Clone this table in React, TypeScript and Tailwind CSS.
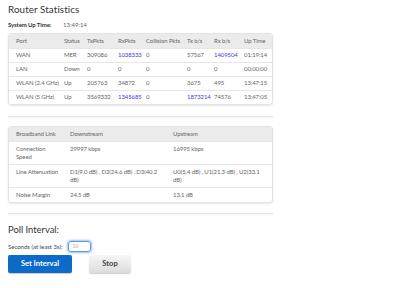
const PORTS = [
  { port: 'WAN', status: 'MER', tx: '309086', rx: '1038333', rxLink: true, col: '0', txbs: '57567', txbsLink: false, rxbs: '1409504', rxbsLink: true, up: '01:19:14' },
  { port: 'LAN', status: 'Down', tx: '0', rx: '0', rxLink: false, col: '0', txbs: '0', txbsLink: false, rxbs: '0', rxbsLink: false, up: '00:00:00' },
  { port: 'WLAN (2.4 GHz)', status: 'Up', tx: '205763', rx: '34872', rxLink: false, col: '0', txbs: '3675', txbsLink: false, rxbs: '495', rxbsLink: false, up: '13:47:15' },
  { port: 'WLAN (5 GHz)', status: 'Up', tx: '3569332', rx: '1345685', rxLink: true, col: '0', txbs: '1873214', txbsLink: true, rxbs: '74576', rxbsLink: false, up: '13:47:05' },
]

const LINK = [
  { name: 'Connection Speed', down: '29997 kbps', up: '16995 kbps' },
  { name: 'Line Attenuation', down: 'D1(9.0 dB) , D2(24.6 dB) , D3(40.2 dB)', up: 'U0(5.4 dB) , U1(21.3 dB) , U2(33.1 dB)' },
  { name: 'Noise Margin', down: '24.5 dB', up: '13.1 dB' },
]

const v = (s: string, link: boolean) => (link ? <span className="text-[#3d3dd6]">{s}</span> : s)

function Rule() {
  return <div className="h-px w-[265px] bg-[#e6e6e6] shadow-[0_1px_2px_rgba(0,0,0,0.08)]" />
}

export default function App() {
  return (
    <div className="h-[288px] w-[400px] overflow-hidden bg-white px-2 pt-[2px] text-[#666] [font-family:Lato,sans-serif]">
      <h1 className="text-[9.8px] leading-[14px] tracking-[0.1px] text-[#333]">Router Statistics</h1>
      <div className="mt-[5px] flex text-[6px] leading-[8px]">
        <span className="w-[55px] font-bold tracking-[-0.1px] text-[#333]">System Up Time:</span>
        <span>13:49:14</span>
      </div>

      <div className="mt-[4px] w-[265px] overflow-hidden rounded-[3px] border border-[#e3e3e3] shadow-[0_1px_2px_rgba(0,0,0,0.1)]">
        <table className="w-full table-fixed border-collapse text-[6px] leading-[8px] tracking-[-0.1px]">
          <colgroup>
            <col className="w-[53px]" />
            <col className="w-[23px]" />
            <col className="w-[31px]" />
            <col className="w-[28px]" />
            <col className="w-[41px]" />
            <col className="w-[27px]" />
            <col className="w-[30px]" />
            <col className="w-[32px]" />
          </colgroup>
          <thead>
            <tr className="h-[14px] bg-[#ebebeb] text-left">
              <th className="whitespace-nowrap pl-[7px] font-normal">Port</th>
              <th className="whitespace-nowrap pl-[2px] font-normal">Status</th>
              <th className="whitespace-nowrap pl-[2px] font-normal">TxPkts</th>
              <th className="whitespace-nowrap pl-[2px] font-normal">RxPkts</th>
              <th className="whitespace-nowrap pl-[2px] font-normal">Collision Pkts</th>
              <th className="whitespace-nowrap pl-[2px] font-normal">Tx b/s</th>
              <th className="whitespace-nowrap pl-[2px] font-normal">Rx b/s</th>
              <th className="whitespace-nowrap pl-[2px] font-normal">Up Time</th>
            </tr>
          </thead>
          <tbody>
            {PORTS.map((r) => (
              <tr key={r.port} className="h-[14px] whitespace-nowrap border-t border-[#e6e6e6]">
                <td className="pl-[7px]">{r.port}</td>
                <td className="pl-[2px]">{r.status}</td>
                <td className="pl-[2px]">{r.tx}</td>
                <td className="pl-[2px]">{v(r.rx, r.rxLink)}</td>
                <td className="pl-[2px]">{r.col}</td>
                <td className="pl-[2px]">{v(r.txbs, r.txbsLink)}</td>
                <td className="pl-[2px]">{v(r.rxbs, r.rxbsLink)}</td>
                <td className="pl-[2px]">{r.up}</td>
              </tr>
            ))}
          </tbody>
        </table>
      </div>

      <div className="mt-[11px]">
        <Rule />
      </div>

      <div className="mt-[9px] w-[265px] overflow-hidden rounded-[3px] border border-[#e3e3e3] shadow-[0_1px_2px_rgba(0,0,0,0.1)]">
        <table className="w-full table-fixed border-collapse text-[6px] leading-[8px] tracking-[-0.1px]">
          <colgroup>
            <col className="w-[59px]" />
            <col className="w-[103px]" />
            <col className="w-[103px]" />
          </colgroup>
          <thead>
            <tr className="h-[14px] bg-[#ebebeb] text-left">
              <th className="whitespace-nowrap pl-[7px] font-normal">Broadband Link</th>
              <th className="pl-[2px] font-normal">Downstream</th>
              <th className="pl-[2px] font-normal">Upstream</th>
            </tr>
          </thead>
          <tbody>
            {LINK.map((r) => (
              <tr key={r.name} className="border-t border-[#e6e6e6] align-top">
                <td className="py-[3px] pl-[7px] pr-[8px]">{r.name}</td>
                <td className="py-[3px] pl-[2px] pr-[8px]">{r.down}</td>
                <td className="py-[3px] pl-[2px] pr-[8px]">{r.up}</td>
              </tr>
            ))}
          </tbody>
        </table>
      </div>

      <div className="mt-[10px]">
        <Rule />
      </div>

      <h2 className="mt-[10px] text-[9.4px] leading-[12px] text-[#333]">Poll Interval:</h2>
      <div className="mt-[5px] flex items-center gap-[6px] text-[6px] text-[#444]">
        <span>Seconds (at least 3s):</span>
        <input
          defaultValue="10"
          className="h-[11px] w-[23px] rounded-[3px] border border-[#5b9be6] px-[3px] text-[5px] text-[#aaa] shadow-[0_0_2px_1px_rgba(80,150,230,0.6)] outline-none"
        />
      </div>
      <div className="mt-[3px] flex gap-[17px]">
        <button className="h-[18px] w-[64px] rounded-[2px] bg-[#0c6bc6] text-[7.5px] font-bold text-white shadow-[0_1px_1px_rgba(0,0,0,0.2)]">
          Set Interval
        </button>
        <button className="h-[18px] w-[42px] rounded-[2px] bg-gradient-to-b from-[#f7f7f7] to-[#dcdcdc] text-[7.5px] font-bold text-[#444] shadow-[0_1px_1px_rgba(0,0,0,0.2)]">
          Stop
        </button>
      </div>
    </div>
  )
}
